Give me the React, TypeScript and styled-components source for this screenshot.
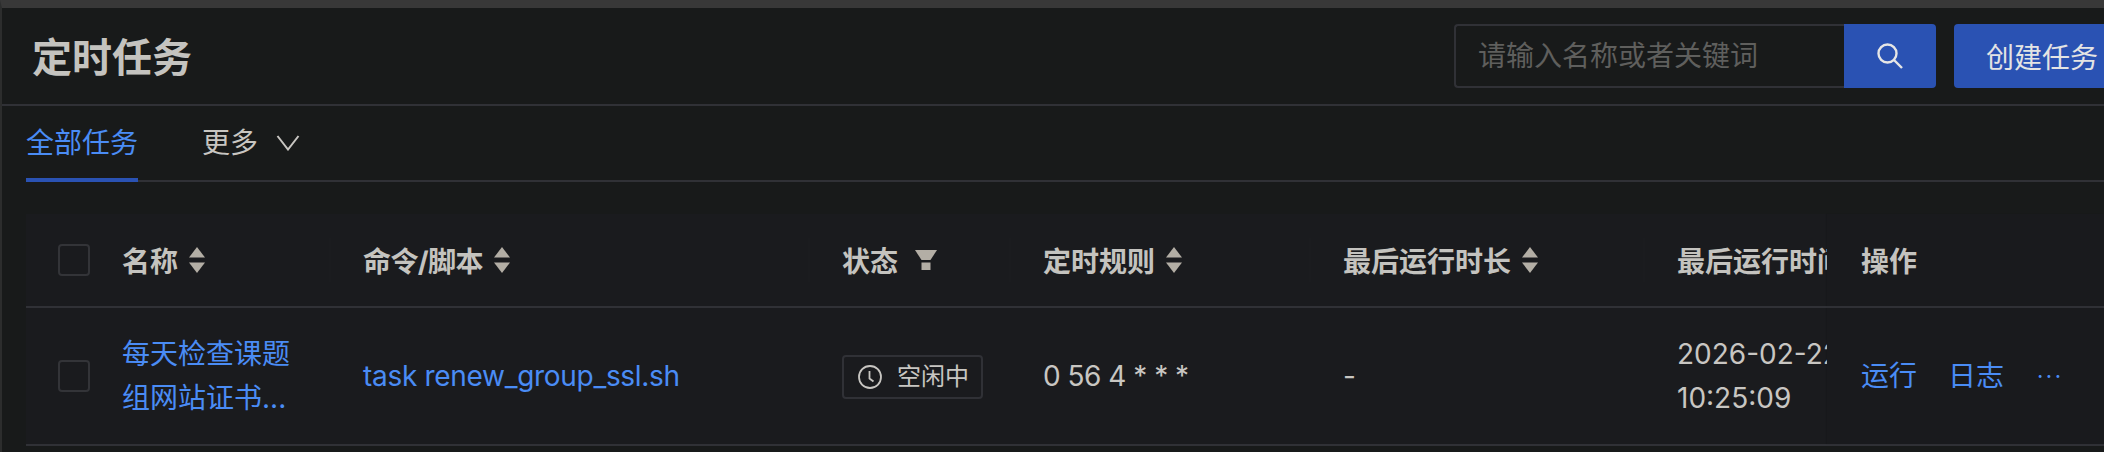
import React from "react";
import styled, { createGlobalStyle } from "styled-components";

const FONT = `Inter, "Noto Sans CJK SC", sans-serif`;

const Global = createGlobalStyle`
  html, body { margin: 0; padding: 0; background: #181a1a; }
  body { font-family: ${FONT}; overflow: hidden; }
`;

const Page = styled.div`
  width: 2104px;
  height: 452px;
  box-sizing: border-box;
  overflow: hidden;
  background: #181a1a;
  border-top: 8px solid #383838;
  border-left: 2px solid #2c2d2d;
  color: #c8c6c2;
  font-size: 28px;
`;

const Header = styled.header`
  height: 98px;
  box-sizing: border-box;
  display: flex;
  align-items: center;
  padding: 0 0 0 30px;
  border-bottom: 2px solid #303136;
`;

const Title = styled.h1`
  margin: 0;
  width: 1422px;
  flex: none;
  padding-top: 3px;
  box-sizing: border-box;
  font-size: 40px;
  font-weight: 700;
  line-height: 56px;
  color: #c4c3bf;
`;

const SearchBox = styled.div`
  flex: none;
  display: flex;
  height: 64px;
`;

const SearchInput = styled.input`
  flex: none;
  width: 390px;
  box-sizing: border-box;
  padding: 0 22px;
  background: transparent;
  border: 2px solid #303136;
  border-right: 0;
  border-radius: 4px 0 0 4px;
  font: 28px ${FONT};
  color: #c8c6c2;
  outline: none;
  &::placeholder { color: #5f5f5d; opacity: 1; }
`;

const SearchButton = styled.button`
  flex: none;
  width: 92px;
  border: 0;
  padding: 0;
  background: #2a52b3;
  border-radius: 0 4px 4px 0;
  display: flex;
  align-items: center;
  justify-content: center;
`;

const CreateButton = styled.button`
  flex: none;
  margin-left: 18px;
  height: 64px;
  width: 174px;
  padding: 0 0 0 32px;
  text-align: left;
  border: 0;
  border-radius: 4px;
  background: #2a52b3;
  color: #e4e4e4;
  font: 28px ${FONT};
`;

const Tabs = styled.nav`
  height: 76px;
  box-sizing: border-box;
  margin-left: 24px;
  display: flex;
  gap: 64px;
  border-bottom: 2px solid #303136;
`;

const Tab = styled.div<{ $active?: boolean }>`
  height: 76px;
  box-sizing: border-box;
  display: flex;
  align-items: center;
  gap: 18px;
  padding-top: 2px;
  line-height: 40px;
  color: ${(p) => (p.$active ? "#4a8cf5" : "#c8c6c2")};
  border-bottom: 4px solid ${(p) => (p.$active ? "#2a52b3" : "transparent")};
`;

const Table = styled.div`
  margin: 32px 0 0 24px;
  background: #1a1b1e;
`;

const Row = styled.div<{ $height: number }>`
  display: grid;
  grid-template-columns: 63px 240px 479px 201px 300px 334px 184px 277px;
  height: ${(p) => p.$height}px;
  box-sizing: border-box;
  border-bottom: 2px solid #303136;
`;

const CheckCell = styled.div`
  display: flex;
  align-items: center;
  padding-left: 32px;
`;

const Check = styled.span`
  width: 32px;
  height: 32px;
  box-sizing: border-box;
  border: 2px solid #333438;
  border-radius: 4px;
  flex: none;
`;

const HeadCell = styled.div<{ $sep?: boolean }>`
  position: relative;
  display: flex;
  align-items: center;
  gap: 11px;
  padding-left: 34px;
  overflow: hidden;
  white-space: nowrap;
  font-weight: 700;
  color: #c4c3bf;
  &::before {
    content: "";
    display: ${(p) => (p.$sep ? "block" : "none")};
    position: absolute;
    left: 0;
    top: 24px;
    bottom: 24px;
    width: 2px;
    background: #1b1c1f;
  }
`;

const ScriptHead = styled(HeadCell)`
  letter-spacing: -0.6px;
`;

const FixedHead = styled(HeadCell)`
  background: #191a1d;
  box-shadow: -1px 0 1px rgba(0, 0, 0, 0.08);
`;

const Cell = styled.div`
  display: flex;
  align-items: center;
  padding-left: 34px;
  overflow: hidden;
  line-height: 44px;
`;

const NameCell = styled(Cell)`
  padding-left: 33px;
`;

const NameHead = styled(HeadCell)`
  padding-left: 33px;
`;

const NameLink = styled.a`
  color: #4a8cf5;
  width: 172px;
`;

const ScriptLink = styled.a`
  color: #4a8cf5;
  white-space: nowrap;
  letter-spacing: -0.3px;
`;

const StatusTag = styled.span`
  display: inline-flex;
  align-items: center;
  height: 44px;
  box-sizing: border-box;
  width: 141px;
  margin-top: 2px;
  padding-left: 14px;
  gap: 15px;
  border: 2px solid #303136;
  border-radius: 4px;
  font-size: 24px;
  white-space: nowrap;
`;

const DataText = styled.span`
  white-space: pre;
  letter-spacing: -0.5px;
`;

const DateText = styled.span`
  display: block;
  width: 170px;
  flex: none;
  white-space: pre;
`;

const ActionCell = styled(Cell)`
  background: #191a1d;
  box-shadow: -1px 0 1px rgba(0, 0, 0, 0.08);
  gap: 31px;
`;

const Action = styled.a`
  color: #4a8cf5;
  white-space: nowrap;
`;

const More = styled(Action)`
  font-size: 22px;
  line-height: 44px;
  letter-spacing: 2.5px;
  margin-left: 2px;
`;

const SortIcon = () => (
  <svg width="16" height="26" viewBox="0 0 16 26" aria-hidden="true" style={{ flex: "none" }}>
    <path d="M8 0 16 10.5H0Z" fill="#b3aea5" />
    <path d="M0 15.5H16L8 26Z" fill="#b3aea5" />
  </svg>
);

const FilterIcon = () => (
  <svg width="22" height="20" viewBox="0 0 22 20" aria-hidden="true" style={{ flex: "none", marginLeft: 6 }}>
    <path d="M0 0H22L15.5 10H6.5Z" fill="#b3aea5" />
    <rect x="6.5" y="12.5" width="9" height="7.5" fill="#b3aea5" />
  </svg>
);

const ChevronIcon = () => (
  <svg width="24" height="16" viewBox="0 0 24 16" aria-hidden="true">
    <path d="M1.5 1 12 14.5 22.5 1" fill="none" stroke="#c8c6c2" strokeWidth="2" />
  </svg>
);

const SearchIcon = () => (
  <svg width="26" height="26" viewBox="0 0 26 26" aria-hidden="true">
    <circle cx="10.5" cy="10.5" r="9" fill="none" stroke="#e6e6e6" strokeWidth="2.4" />
    <path d="M17 17 25 25" stroke="#e6e6e6" strokeWidth="2.4" />
  </svg>
);

const ClockIcon = () => (
  <svg width="24" height="24" viewBox="0 0 24 24" aria-hidden="true" style={{ flex: "none" }}>
    <circle cx="12" cy="12" r="11" fill="none" stroke="#c8c6c2" strokeWidth="1.8" />
    <path d="M11.5 6V13.5L15.5 16.5" fill="none" stroke="#c8c6c2" strokeWidth="1.8" />
  </svg>
);

export default function App() {
  return (
    <Page>
      <Global />
      <Header>
        <Title>定时任务</Title>
        <SearchBox>
          <SearchInput placeholder="请输入名称或者关键词" />
          <SearchButton aria-label="搜索">
            <SearchIcon />
          </SearchButton>
        </SearchBox>
        <CreateButton>创建任务</CreateButton>
      </Header>
      <Tabs>
        <Tab $active>全部任务</Tab>
        <Tab>
          更多
          <ChevronIcon />
        </Tab>
      </Tabs>
      <Table>
        <Row $height={94}>
          <CheckCell>
            <Check />
          </CheckCell>
          <NameHead>
            名称
            <SortIcon />
          </NameHead>
          <ScriptHead $sep>
            命令/脚本
            <SortIcon />
          </ScriptHead>
          <HeadCell $sep>
            状态
            <FilterIcon />
          </HeadCell>
          <HeadCell $sep>
            定时规则
            <SortIcon />
          </HeadCell>
          <HeadCell $sep>
            最后运行时长
            <SortIcon />
          </HeadCell>
          <HeadCell $sep>最后运行时间</HeadCell>
          <FixedHead>操作</FixedHead>
        </Row>
        <Row $height={138}>
          <CheckCell>
            <Check />
          </CheckCell>
          <NameCell>
            <NameLink>每天检查课题组网站证书...</NameLink>
          </NameCell>
          <Cell>
            <ScriptLink>task renew_group_ssl.sh</ScriptLink>
          </Cell>
          <Cell>
            <StatusTag>
              <ClockIcon />
              空闲中
            </StatusTag>
          </Cell>
          <Cell>
            <DataText>0 56 4 * * *</DataText>
          </Cell>
          <Cell>
            <DataText>-</DataText>
          </Cell>
          <Cell>
            <DateText>{"2026-02-22\n10:25:09"}</DateText>
          </Cell>
          <ActionCell>
            <Action>运行</Action>
            <Action>日志</Action>
            <More>···</More>
          </ActionCell>
        </Row>
      </Table>
    </Page>
  );
}
